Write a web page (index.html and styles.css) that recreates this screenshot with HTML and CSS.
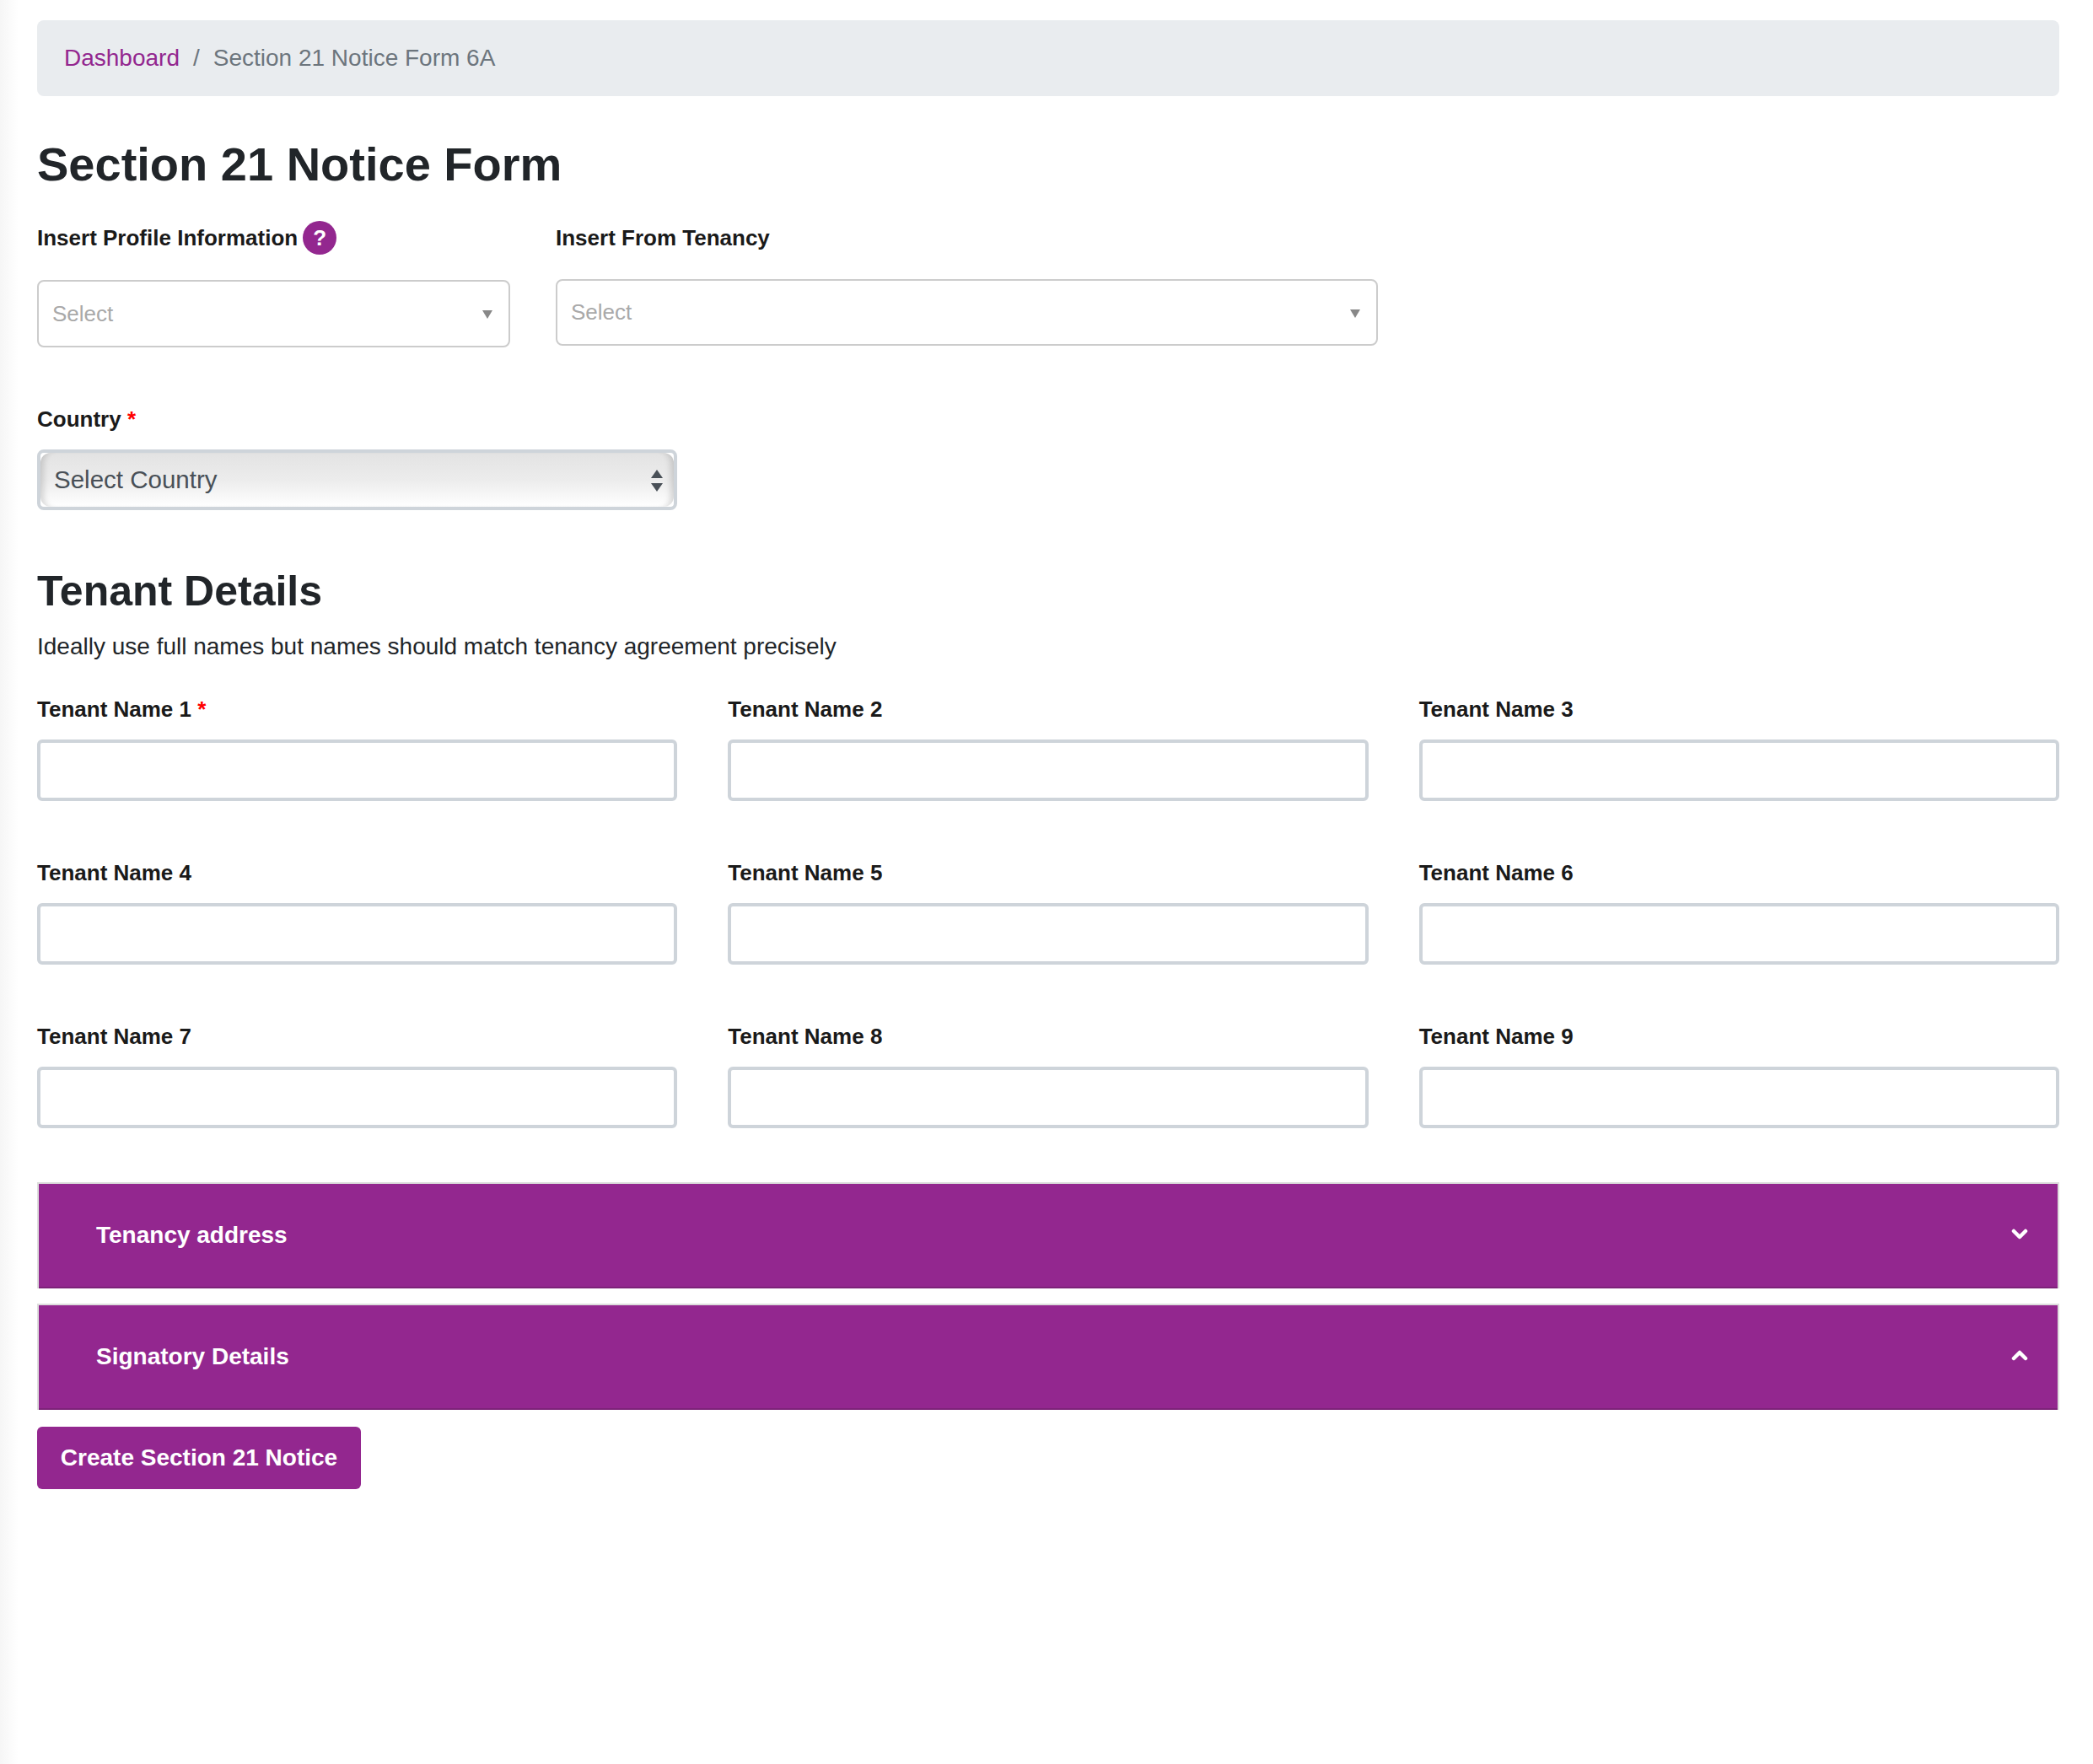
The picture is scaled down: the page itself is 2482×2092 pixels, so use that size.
FILE: index.html
```html
<!DOCTYPE html>
<html lang="en">
<head>
    <meta charset="UTF-8">
    <meta name="viewport" content="width=device-width, initial-scale=1.0">
    <title>Section 21 Notice Form</title>
    <link rel="stylesheet" href="styles.css">
</head>
<body>
    <div class="container">
        <nav class="breadcrumb">
            <a href="#" class="breadcrumb-link">Dashboard</a>
            <span class="breadcrumb-sep">/</span>
            <span class="breadcrumb-current">Section 21 Notice Form 6A</span>
        </nav>

        <h1>Section 21 Notice Form</h1>

        <form id="noticeForm">
            <div class="insert-row">
                <div class="insert-profile">
                    <div class="insert-label">
                        <label>Insert Profile Information</label>
                        <span class="help-icon">?</span>
                    </div>
                    <div class="fancy-select fancy-select-profile">
                        <span>Select</span>
                        <i class="fancy-arrow"></i>
                    </div>
                </div>
                <div class="insert-tenancy">
                    <div class="insert-label">
                        <label>Insert From Tenancy</label>
                    </div>
                    <div class="fancy-select fancy-select-tenancy">
                        <span>Select</span>
                        <i class="fancy-arrow"></i>
                    </div>
                </div>
            </div>

            <div class="country-field">
                <label for="country">Country <span class="required">*</span></label>
                <div class="native-select">
                    <select id="country" name="country">
                        <option>Select Country</option>
                    </select>
                    <svg class="native-arrows" width="14" height="26" viewBox="0 0 14 26">
                        <path d="M7 0L14 10H0Z" fill="#495057"/>
                        <path d="M0 16H14L7 26Z" fill="#495057"/>
                    </svg>
                </div>
            </div>

            <h2>Tenant Details</h2>
            <p class="hint">Ideally use full names but names should match tenancy agreement precisely</p>

            <div class="tenant-grid">
                <div class="field">
                    <label for="tenant1">Tenant Name 1 <span class="required">*</span></label>
                    <input type="text" id="tenant1">
                </div>
                <div class="field">
                    <label for="tenant2">Tenant Name 2</label>
                    <input type="text" id="tenant2">
                </div>
                <div class="field">
                    <label for="tenant3">Tenant Name 3</label>
                    <input type="text" id="tenant3">
                </div>
                <div class="field">
                    <label for="tenant4">Tenant Name 4</label>
                    <input type="text" id="tenant4">
                </div>
                <div class="field">
                    <label for="tenant5">Tenant Name 5</label>
                    <input type="text" id="tenant5">
                </div>
                <div class="field">
                    <label for="tenant6">Tenant Name 6</label>
                    <input type="text" id="tenant6">
                </div>
                <div class="field">
                    <label for="tenant7">Tenant Name 7</label>
                    <input type="text" id="tenant7">
                </div>
                <div class="field">
                    <label for="tenant8">Tenant Name 8</label>
                    <input type="text" id="tenant8">
                </div>
                <div class="field">
                    <label for="tenant9">Tenant Name 9</label>
                    <input type="text" id="tenant9">
                </div>
            </div>

            <div class="accordion">
                <div class="accordion-item">
                    <div class="accordion-header">
                        <span>Tenancy address</span>
                        <svg class="accordion-chevron" width="20" height="14" viewBox="0 0 20 14">
                            <path d="M3 3L10 10L17 3" fill="none" stroke="#fff" stroke-width="4.5" stroke-linecap="round" stroke-linejoin="round"/>
                        </svg>
                    </div>
                </div>
                <div class="accordion-item">
                    <div class="accordion-header">
                        <span>Signatory Details</span>
                        <svg class="accordion-chevron" width="20" height="14" viewBox="0 0 20 14">
                            <path d="M3 10L10 3L17 10" fill="none" stroke="#fff" stroke-width="4.5" stroke-linecap="round" stroke-linejoin="round"/>
                        </svg>
                    </div>
                </div>
            </div>

            <button type="submit">Create Section 21 Notice</button>
        </form>
    </div>
</body>
</html>
```

FILE: styles.css
```css
body {
    margin: 0;
    min-height: 2092px;
    font-family: "Liberation Sans", Arial, sans-serif;
    font-size: 26px;
    color: #212529;
    background: linear-gradient(to right, #f6f6f6, #fff) left top / 22px 100% no-repeat #fff;
}

.container {
    padding: 24px 40px 0 44px;
}

.breadcrumb {
    display: flex;
    align-items: center;
    height: 90px;
    padding: 0 32px;
    border-radius: 8px;
    background-color: #e9ecef;
    font-size: 28px;
    color: #6c757d;
}

.breadcrumb-link {
    color: #93278f;
    text-decoration: none;
}

.breadcrumb-sep {
    margin: 0 16px;
}

h1 {
    margin: 49px 0 35px;
    font-size: 56px;
    line-height: 64px;
}

h2 {
    margin: 68px 0 20px;
    font-size: 50px;
    line-height: 56px;
}

label {
    font-weight: bold;
    color: #1a1a1a;
}

.required {
    color: #f00;
}

.insert-row {
    display: flex;
    gap: 54px;
}

.insert-profile {
    width: 561px;
}

.insert-tenancy {
    width: 975px;
}

.insert-label {
    display: flex;
    align-items: center;
    gap: 6px;
    height: 40px;
}

.help-icon {
    width: 40px;
    height: 40px;
    border-radius: 50%;
    background-color: #93278f;
    color: #fff;
    font-weight: bold;
    font-size: 26px;
    line-height: 40px;
    text-align: center;
}

.fancy-select {
    display: flex;
    align-items: center;
    justify-content: space-between;
    box-sizing: border-box;
    height: 80px;
    padding: 0 19px 0 16px;
    border: 2px solid #ccc;
    border-radius: 8px;
    color: #a9a9a9;
}

.fancy-select-profile {
    margin-top: 30px;
}

.fancy-select-tenancy {
    height: 79px;
    margin-top: 29px;
}

.fancy-arrow {
    width: 0;
    height: 0;
    margin-top: 2px;
    border-left: 6px solid transparent;
    border-right: 6px solid transparent;
    border-top: 10px solid #888;
}

.country-field {
    margin-top: 69px;
    width: 759px;
}

.country-field label,
.field label {
    display: block;
    height: 32px;
    line-height: 32px;
}

.native-select {
    position: relative;
    box-sizing: border-box;
    height: 72px;
    margin-top: 20px;
    border: 4px solid #ced4da;
    border-radius: 8px;
    background-color: #fff;
}

.native-select select {
    appearance: none;
    display: block;
    width: 100%;
    height: 100%;
    padding: 0 0 2px 16px;
    border: none;
    border-radius: 12px;
    font-family: inherit;
    font-size: 29.5px;
    color: #495057;
    background: linear-gradient(to bottom, #e3e3e3, #ececec 50%, #fff);
    box-shadow: inset 9px 0 7px -5px rgba(0, 0, 0, 0.14), inset -9px 0 7px -5px rgba(0, 0, 0, 0.14);
}

.native-arrows {
    position: absolute;
    right: 13px;
    top: 20px;
}

.hint {
    margin: 0;
    font-size: 28px;
    line-height: 36px;
}

.tenant-grid {
    display: grid;
    grid-template-columns: repeat(3, 1fr);
    column-gap: 60px;
    row-gap: 69px;
    margin-top: 40px;
}

.field input {
    display: block;
    box-sizing: border-box;
    width: 100%;
    height: 73px;
    margin-top: 20px;
    border: 4px solid #ced4da;
    border-radius: 6px;
    background-color: #fff;
}

.accordion {
    margin-top: 64px;
}

.accordion-item {
    margin-bottom: 20px;
    border: 2px solid #ddd;
    border-bottom: none;
}

.accordion-item:last-child {
    margin-bottom: 22px;
}

.accordion-header {
    display: flex;
    align-items: center;
    justify-content: space-between;
    box-sizing: border-box;
    height: 124px;
    margin-bottom: -2px;
    padding: 0 35px 0 68px;
    border-bottom: 2px solid #7d2279;
    background-color: #93278f;
    color: #fff;
    font-size: 28px;
    font-weight: bold;
}

.accordion-chevron {
    margin-bottom: 3px;
}

button {
    display: block;
    width: 384px;
    height: 74px;
    padding: 0;
    border: none;
    border-radius: 6px;
    background-color: #93278f;
    color: #fff;
    font-family: inherit;
    font-size: 28px;
    font-weight: bold;
    cursor: pointer;
}
```
